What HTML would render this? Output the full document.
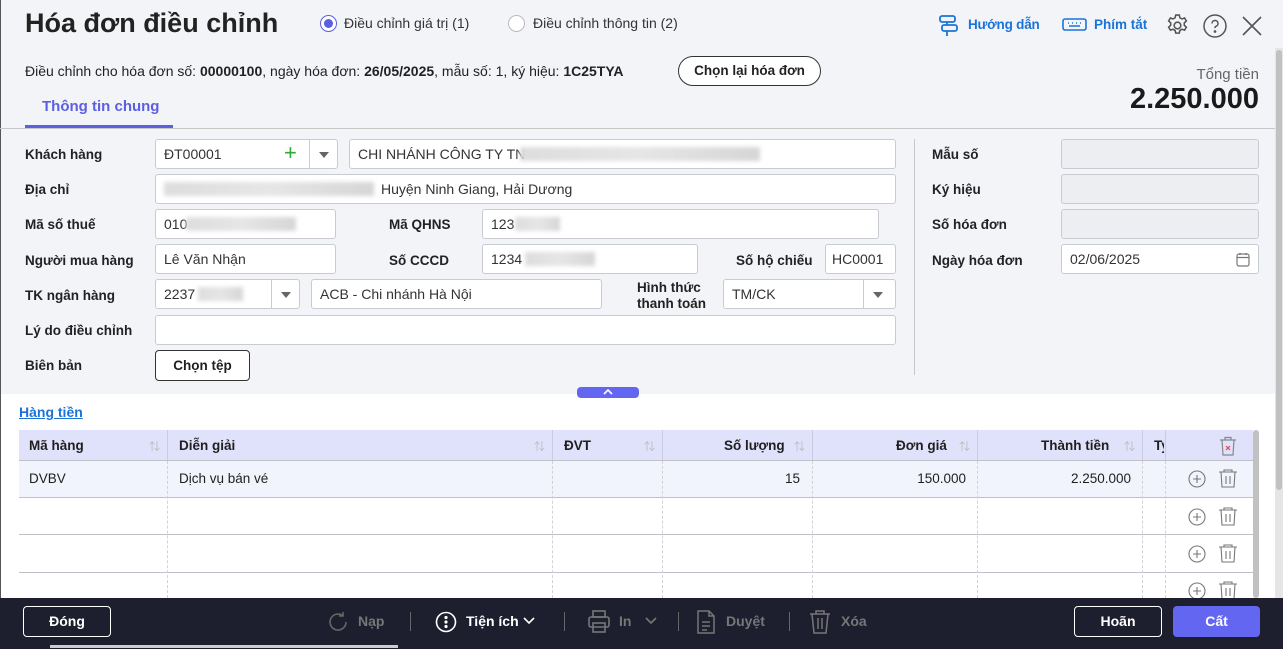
<!DOCTYPE html>
<html><head><meta charset="utf-8">
<style>
*{box-sizing:border-box;margin:0;padding:0}
body{width:1283px;height:649px;overflow:hidden;font-family:"Liberation Sans","Noto Sans CJK SC",sans-serif;color:#1f1f1f;background:#fff;position:relative;font-size:14px}
.a{position:absolute}
.top{left:0;top:0;width:1283px;height:394px;background:#f3f4f8}
.lbl{position:absolute;font-weight:bold;font-size:13.5px;color:#222}
.in{position:absolute;height:30px;background:#fff;border:1px solid #c9cbd2;border-radius:3px;font-size:14px;line-height:28px;padding-left:8px;color:#333}
.gr{background:#eceef2}
.blur{position:absolute;height:14px;background:linear-gradient(90deg,#ddd,#e6e6e6,#d6d6d6);filter:blur(2px);top:7px}
.dd{position:absolute;top:0;bottom:0;width:28px;border-left:1px solid #c9cbd2;right:0}
.dd:after{content:"";position:absolute;left:9px;top:12px;border:5px solid transparent;border-top:6px solid #666}
.hdr{position:absolute;top:430px;height:31px;background:#e0e1fa;left:19px;width:1234px}
.c{position:absolute;top:0;height:100%;border-left:1px solid #c9cbe0}
.vl{position:absolute;top:461px;height:137px;border-left:1px dashed #d2d2d2}
.hl{position:absolute;left:19px;width:1234px;height:1px;background:#c0c1c8}
.ht{position:absolute;top:438px;font-weight:bold;font-size:13.5px}
.srt{position:absolute;top:438px;color:#bbb;font-size:11px}
.fb{position:absolute;top:606px;height:31px;border:1px solid #fff;border-radius:4px;color:#fff;font-weight:bold;text-align:center;line-height:29px;font-size:14px}
.ft{position:absolute;top:613px;font-weight:bold;font-size:14px;color:#777}
.sep{position:absolute;top:612px;width:1px;height:19px;background:#666}
</style></head><body>
<div class="a top"></div>
<div class="a" style="left:0;top:0;width:1px;height:649px;background:#555"></div>
<div class="a" style="left:1275px;top:48px;width:8px;height:550px;background:#e5e5e5"></div>
<div class="a" style="left:1276px;top:50px;width:6px;height:440px;background:#c1c1c1;border-radius:3px"></div>

<div class="a" style="left:25px;top:8px;font-size:27px;font-weight:bold;color:#222">Hóa đơn điều chỉnh</div>
<div class="a" style="left:320px;top:15px;width:17px;height:17px;border:1px solid #5b5fe0;border-radius:50%;background:#fff"><div style="position:absolute;left:3px;top:3px;width:9px;height:9px;border-radius:50%;background:#5b5fe0"></div></div>
<div class="a" style="left:344px;top:15px;font-size:14px;color:#333">Điều chỉnh giá trị (1)</div>
<div class="a" style="left:508px;top:15px;width:17px;height:17px;border:1px solid #bbb;border-radius:50%;background:#fff"></div>
<div class="a" style="left:533px;top:15px;font-size:14px;color:#333">Điều chỉnh thông tin (2)</div>

<div class="a" style="left:25px;top:63px;font-size:14px;color:#222">Điều chỉnh cho hóa đơn số: <b>00000100</b>, ngày hóa đơn: <b>26/05/2025</b>, mẫu số: 1, ký hiệu: <b>1C25TYA</b></div>
<div class="a" style="left:678px;top:56px;width:143px;height:30px;border:1px solid #333;border-radius:15px;background:#fff;text-align:center;line-height:28px;font-size:13.5px;font-weight:bold;color:#222">Chọn lại hóa đơn</div>
<div class="a" style="left:42px;top:98px;font-size:15px;font-weight:bold;color:#5b5fe0">Thông tin chung</div>
<div class="a" style="left:25px;top:125px;width:148px;height:3px;background:#5b5fe0"></div>
<div class="a" style="left:0;top:128px;width:1275px;height:1px;background:#c8c8c8"></div>

<svg class="a" style="left:938px;top:14px" width="22" height="24" viewBox="0 0 22 24" fill="none" stroke="#1a73d9" stroke-width="1.8"><rect x="2" y="2" width="15" height="6" rx="2"/><rect x="4" y="11" width="15" height="6" rx="2"/><path d="M9 17v5M9 8v3"/></svg>
<div class="a" style="left:968px;top:17px;font-size:13.5px;font-weight:bold;color:#1a73d9;letter-spacing:-0.2px">Hướng dẫn</div>
<svg class="a" style="left:1062px;top:17px" width="25" height="15" viewBox="0 0 25 15" fill="none" stroke="#1a73d9" stroke-width="1.6"><rect x="1" y="2" width="23" height="11" rx="2"/><path d="M6 6h1M10 6h1M14 6h1M18 6h1M7 9h11"/></svg>
<div class="a" style="left:1094px;top:17px;font-size:13.5px;font-weight:bold;color:#1a73d9">Phím tắt</div>
<svg class="a" style="left:1165px;top:13px" width="25" height="25" viewBox="0 0 24 24" fill="none" stroke="#555" stroke-width="1.5"><circle cx="12" cy="12" r="3.2"/><path d="M10.3 2h3.4l.6 2.6 2 1.1 2.5-.9 1.7 2.9-2 1.8v2.3l2 1.8-1.7 2.9-2.5-.9-2 1.1-.6 2.6h-3.4l-.6-2.6-2-1.1-2.5.9-1.7-2.9 2-1.8V9.5l-2-1.8 1.7-2.9 2.5.9 2-1.1z"/></svg>
<svg class="a" style="left:1203px;top:14px" width="24" height="24" viewBox="0 0 24 24" fill="none" stroke="#555" stroke-width="1.5"><circle cx="12" cy="12" r="11"/><path d="M9 9.5a3 3 0 1 1 4 2.8c-.8.4-1 1-1 1.8"/><circle cx="12" cy="17.5" r=".6" fill="#555"/></svg>
<svg class="a" style="left:1242px;top:16px" width="20" height="20" viewBox="0 0 20 20" stroke="#555" stroke-width="1.6"><path d="M1 1l18 18M19 1L1 19"/></svg>
<div class="a" style="right:24px;top:66px;font-size:15px;color:#666">Tổng tiền</div>
<div class="a" style="right:24px;top:83px;font-size:29px;font-weight:bold;color:#1a1a1a">2.250.000</div>

<!-- form -->
<div class="lbl" style="left:25px;top:147px">Khách hàng</div>
<div class="in" style="left:155px;top:139px;width:183px">ĐT00001<span style="position:absolute;left:128px;top:-1px;color:#2faa3a;font-size:22px">+</span><div class="dd"></div></div>
<div class="in" style="left:349px;top:139px;width:547px">CHI NHÁNH CÔNG TY TN<div class="blur" style="left:170px;width:240px"></div></div>
<div class="lbl" style="left:25px;top:182px">Địa chỉ</div>
<div class="in" style="left:155px;top:174px;width:741px"><div class="blur" style="left:8px;width:210px"></div><span style="position:absolute;left:225px">Huyện Ninh Giang, Hải Dương</span></div>
<div class="lbl" style="left:25px;top:217px">Mã số thuế</div>
<div class="in" style="left:155px;top:209px;width:181px">010<div class="blur" style="left:30px;width:110px"></div></div>
<div class="lbl" style="left:389px;top:217px">Mã QHNS</div>
<div class="in" style="left:482px;top:209px;width:397px">123<div class="blur" style="left:32px;width:45px"></div></div>
<div class="lbl" style="left:25px;top:253px">Người mua hàng</div>
<div class="in" style="left:155px;top:244px;width:181px">Lê Văn Nhận</div>
<div class="lbl" style="left:389px;top:253px">Số CCCD</div>
<div class="in" style="left:482px;top:244px;width:216px">1234<div class="blur" style="left:42px;width:70px"></div></div>
<div class="lbl" style="left:736px;top:253px">Số hộ chiếu</div>
<div class="in" style="left:825px;top:244px;width:71px;padding-left:6px">HC0001</div>
<div class="lbl" style="left:25px;top:288px">TK ngân hàng</div>
<div class="in" style="left:155px;top:279px;width:145px">2237<div class="blur" style="left:42px;width:45px"></div><div class="dd"></div></div>
<div class="in" style="left:311px;top:279px;width:291px">ACB - Chi nhánh Hà Nội</div>
<div class="lbl" style="left:637px;top:280px;line-height:16px">Hình thức<br>thanh toán</div>
<div class="in" style="left:723px;top:279px;width:173px">TM/CK<div class="dd" style="width:32px"></div></div>
<div class="lbl" style="left:25px;top:323px">Lý do điều chỉnh</div>
<div class="in" style="left:155px;top:315px;width:741px"></div>
<div class="lbl" style="left:25px;top:358px">Biên bản</div>
<div class="a" style="left:155px;top:350px;width:95px;height:31px;border:1px solid #333;border-radius:4px;background:#fff;text-align:center;line-height:29px;font-weight:bold;font-size:13.5px">Chọn tệp</div>
<div class="a" style="left:914px;top:139px;width:1px;height:236px;background:#c8c8c8"></div>
<div class="lbl" style="left:932px;top:147px">Mẫu số</div>
<div class="in gr" style="left:1061px;top:139px;width:198px"></div>
<div class="lbl" style="left:932px;top:182px">Ký hiệu</div>
<div class="in gr" style="left:1061px;top:174px;width:198px"></div>
<div class="lbl" style="left:932px;top:217px">Số hóa đơn</div>
<div class="in gr" style="left:1061px;top:209px;width:198px"></div>
<div class="lbl" style="left:932px;top:253px">Ngày hóa đơn</div>
<div class="in" style="left:1061px;top:244px;width:198px">02/06/2025<svg style="position:absolute;right:8px;top:7px" width="14" height="15" viewBox="0 0 14 15" fill="none" stroke="#777" stroke-width="1.2"><rect x="1" y="2" width="12" height="12" rx="2"/><path d="M1 5.5h12M4 1v2M10 1v2"/></svg></div>
<div class="a" style="left:577px;top:387px;width:62px;height:11px;background:#6366f1;border-radius:4px"><svg style="position:absolute;left:26px;top:2px" width="10" height="6" viewBox="0 0 10 6" fill="none" stroke="#fff" stroke-width="1.6"><path d="M1 5l4-4 4 4"/></svg></div>

<div class="a" style="left:19px;top:404px;font-size:14px;font-weight:bold;color:#1a73d9;text-decoration:underline">Hàng tiền</div>

<!-- table -->
<div class="hdr"><div class="c" style="left:148px"></div><div class="c" style="left:533px"></div><div class="c" style="left:643px"></div><div class="c" style="left:793px"></div><div class="c" style="left:958px"></div><div class="c" style="left:1123px"></div><div class="c" style="left:1146px"></div></div>
<div class="a" style="left:19px;top:461px;width:1234px;height:36px;background:#f2f4fd"></div>
<div class="hl" style="top:460px"></div><div class="hl" style="top:497px"></div><div class="hl" style="top:534px"></div><div class="hl" style="top:572px"></div>
<div class="vl" style="left:167px"></div><div class="vl" style="left:552px"></div><div class="vl" style="left:662px"></div><div class="vl" style="left:812px"></div><div class="vl" style="left:977px"></div><div class="vl" style="left:1142px"></div><div class="vl" style="left:1165px"></div>
<div class="a" style="left:1253px;top:430px;width:6px;height:168px;background:#c1c1c1;border-radius:3px"></div>
<div class="ht" style="left:29px">Mã hàng</div><div class="srt" style="left:149px">⇅</div>
<div class="ht" style="left:179px">Diễn giải</div><div class="srt" style="left:534px">⇅</div>
<div class="ht" style="left:564px">ĐVT</div><div class="srt" style="left:644px">⇅</div>
<div class="ht" style="left:724px">Số lượng</div><div class="srt" style="left:794px">⇅</div>
<div class="ht" style="left:896px">Đơn giá</div><div class="srt" style="left:959px">⇅</div>
<div class="ht" style="left:1041px">Thành tiền</div><div class="srt" style="left:1124px">⇅</div>
<div class="ht" style="left:1154px;width:10px;overflow:hidden">Ty</div>
<div class="a" style="left:29px;top:471px;font-size:13.5px">DVBV</div>
<div class="a" style="left:179px;top:471px;font-size:13.5px">Dịch vụ bán vé</div>
<div class="a" style="right:483px;top:471px;font-size:13.5px">15</div>
<div class="a" style="right:317px;top:471px;font-size:13.5px">150.000</div>
<div class="a" style="right:152px;top:471px;font-size:13.5px">2.250.000</div>
<svg class="a" style="left:1219px;top:436px" width="18" height="20" viewBox="0 0 18 20" fill="none" stroke="#888" stroke-width="1.2"><path d="M1 4h16M6 4V1.5h6V4M3 4l1 15h10l1-15"/><path d="M7 10l4 4M11 10l-4 4" stroke="#e44"/></svg>
<svg class="a" style="left:0;top:0" width="1283" height="649" fill="none" stroke="#777" stroke-width="1.1">
<g id="r"><circle cx="1197" cy="479" r="8"/><path d="M1197 475v8M1193 479h8"/><path d="M1219 472h18M1224 472v-2h8v2M1221 472l1 15h12l1-15M1226 476v8M1230 476v8"/></g>
<use href="#r" y="38"/><use href="#r" y="75"/><use href="#r" y="112"/>
</svg>

<!-- footer -->
<div class="a" style="left:0;top:598px;width:1283px;height:51px;background:#1e1f2e"></div>
<div class="a" style="left:50px;top:645px;width:348px;height:3px;background:#ccc"></div>
<div class="fb" style="left:23px;width:88px">Đóng</div>
<svg class="a" style="left:326px;top:610px" width="24" height="24" viewBox="0 0 24 24" fill="none" stroke="#666" stroke-width="1.6"><path d="M20 12a8 8 0 1 1-3-6.2M17 2v4h-4"/></svg>
<div class="ft" style="left:358px">Nạp</div>
<div class="sep" style="left:410px"></div>
<svg class="a" style="left:435px;top:611px" width="22" height="22" viewBox="0 0 22 22" fill="none" stroke="#fff" stroke-width="1.6"><circle cx="11" cy="11" r="9.5"/><circle cx="11" cy="6.5" r=".8" fill="#fff"/><circle cx="11" cy="11" r=".8" fill="#fff"/><circle cx="11" cy="15.5" r=".8" fill="#fff"/></svg>
<div class="ft" style="left:466px;color:#fff">Tiện ích</div>
<svg class="a" style="left:523px;top:617px" width="12" height="8" viewBox="0 0 12 8" fill="none" stroke="#fff" stroke-width="1.6"><path d="M1 1l5 5 5-5"/></svg>
<div class="sep" style="left:564px"></div>
<svg class="a" style="left:588px;top:610px" width="22" height="24" viewBox="0 0 22 24" fill="none" stroke="#777" stroke-width="1.6"><rect x="5" y="1" width="12" height="6"/><rect x="1" y="7" width="20" height="10" rx="2"/><rect x="5" y="13" width="12" height="9"/></svg>
<div class="ft" style="left:619px">In</div>
<svg class="a" style="left:645px;top:617px" width="12" height="8" viewBox="0 0 12 8" fill="none" stroke="#777" stroke-width="1.6"><path d="M1 1l5 5 5-5"/></svg>
<div class="sep" style="left:678px"></div>
<svg class="a" style="left:697px;top:610px" width="18" height="24" viewBox="0 0 18 24" fill="none" stroke="#777" stroke-width="1.5"><path d="M1 1h11l5 5v17H1zM12 1v5h5M5 12h8M5 16h8M5 20h5"/></svg>
<div class="ft" style="left:726px">Duyệt</div>
<div class="sep" style="left:789px"></div>
<svg class="a" style="left:809px;top:610px" width="22" height="24" viewBox="0 0 22 24" fill="none" stroke="#777" stroke-width="1.5"><path d="M1 4h20M7 4V1h8v3M3 4l2 19h12l2-19M9 8v11M13 8v11"/></svg>
<div class="ft" style="left:841px">Xóa</div>
<div class="fb" style="left:1074px;width:88px">Hoãn</div>
<div class="fb" style="left:1173px;width:87px;background:#6366f1;border-color:#6366f1">Cất</div>
</body></html>
